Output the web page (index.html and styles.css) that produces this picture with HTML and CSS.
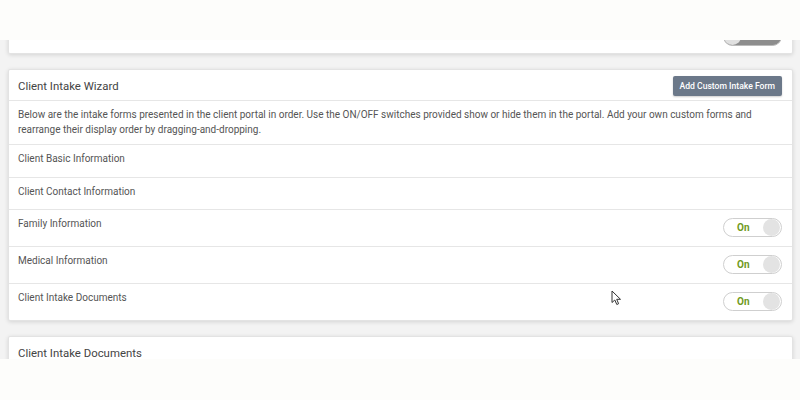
FILE: index.html
```html
<!DOCTYPE html>
<html>
<head>
<meta charset="utf-8">
<link rel="stylesheet" href="styles.css">
</head>
<body>
<div class="topbar"></div>
<div class="viewport">
  <div class="card prev">
    <div class="prev-row">
      <div class="toggle off"><span class="knob"></span><span class="label">Off</span></div>
    </div>
  </div>
  <div class="card">
    <div class="card-header">
      <div class="title">Client Intake Wizard</div>
      <button class="btn">Add Custom Intake Form</button>
    </div>
    <div class="desc">Below are the intake forms presented in the client portal in order. Use the ON/OFF switches provided show or hide them in the portal. Add your own custom forms and rearrange their display order by dragging-and-dropping.</div>
    <div class="row"><span class="name">Client Basic Information</span></div>
    <div class="row"><span class="name">Client Contact Information</span></div>
    <div class="row tall"><span class="name">Family Information</span><div class="toggle"><span class="label">On</span><span class="knob"></span></div></div>
    <div class="row tall"><span class="name">Medical Information</span><div class="toggle"><span class="label">On</span><span class="knob"></span></div></div>
    <div class="row tall last"><span class="name">Client Intake Documents</span><div class="toggle"><span class="label">On</span><span class="knob"></span></div></div>
  </div>
  <div class="card">
    <div class="card-header"><div class="title">Client Intake Documents</div></div>
  </div>
  <svg class="cursor" width="12" height="16" viewBox="0 0 12 16"><path d="M1 1 L1 12.5 L3.8 10 L5.8 14.5 L7.6 13.7 L5.7 9.3 L9.5 9.3 Z" fill="#fff" stroke="#333" stroke-width="1" stroke-linejoin="round"/></svg>
</div>
</body>
</html>
```

FILE: styles.css
```css
html, body {
  margin: 0;
  padding: 0;
  background: #fdfdfb;
  font-family: Roboto, "Liberation Sans", sans-serif;
  color: #555;
}
.topbar {
  height: 40px;
  background: #fdfdfb;
}
.viewport {
  position: relative;
  height: 319px;
  overflow: hidden;
  background: #f3f3f3;
  padding: 0 7px 0 8px;
  display: flex;
  flex-direction: column;
  gap: 15px;
}
.card {
  background: #fff;
  border: 1px solid #e3e3e3;
  border-radius: 2px;
  box-shadow: 0 1px 4px rgba(0,0,0,0.13);
  flex-shrink: 0;
}
.card.prev {
  margin-top: -26px;
  height: 39px;
  border-top: none;
}
.prev-row {
  display: flex;
  justify-content: flex-end;
  padding: 13px 10px 0;
}
.card-header {
  display: flex;
  justify-content: space-between;
  align-items: center;
  padding: 6px 10px 4px 9px;
  min-height: 20px;
  border-bottom: 1px solid #e6e6e6;
}
.title {
  font-size: 11.4px;
  line-height: 14px;
  color: #444;
}
.btn {
  height: 20px;
  padding: 0 7px;
  background: #6b7889;
  color: #fff;
  border: none;
  border-radius: 2px;
  font-family: Roboto, "Liberation Sans", sans-serif;
  font-size: 8.6px;
  font-weight: 500;
  box-shadow: 0 1px 2px rgba(0,0,0,0.2);
}
.desc {
  font-size: 10px;
  line-height: 15px;
  padding: 6px 10px 7px 9px;
  border-bottom: 1px solid #e6e6e6;
  color: #555;
}
.row {
  display: flex;
  justify-content: space-between;
  align-items: flex-start;
  padding: 6px 10px 10.5px 9px;
  border-bottom: 1px solid #e6e6e6;
  font-size: 10px;
  line-height: 15px;
}
.row.tall {
  padding-bottom: 9px;
}
.row.last {
  border-bottom: none;
}
.toggle {
  margin-top: 2px;
  width: 56px;
  height: 17px;
  border: 1px solid #cfcfcf;
  border-radius: 10px;
  display: flex;
  align-items: center;
  justify-content: space-between;
  padding: 0 1px 0 0;
  background: #fff;
}
.toggle .label {
  font-size: 10px;
  font-weight: 700;
  color: #6f9a22;
  padding-left: 13px;
}
.toggle .knob {
  width: 17px;
  height: 17px;
  border-radius: 50%;
  background: #e3e3e3;
}
.toggle.off {
  background: #8d8d8d;
  border-color: #bbb;
  margin-top: 0;
}
.toggle.off .knob {
  background: #e0e0e0;
}
.toggle.off .label {
  color: #c9a078;
  padding-right: 10px;
}
.cursor {
  position: absolute;
  left: 611px;
  top: 250px;
}
```
